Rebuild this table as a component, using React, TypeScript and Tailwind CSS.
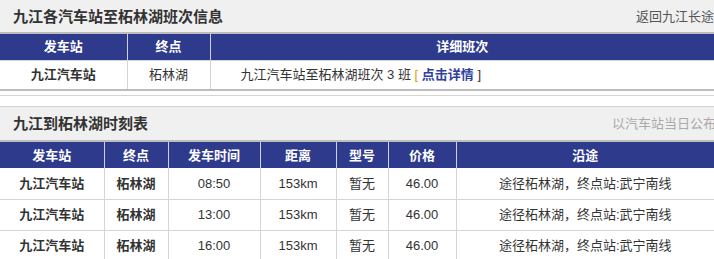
import React from 'react';

const rows = [
  { time: '08:50' },
  { time: '13:00' },
  { time: '16:00' },
];

const th = 'border-x border-[#cfd2e6] font-bold text-white text-[13px] text-center';
const td = 'border border-[#d4d4d4] text-[13px] text-center text-[#333]';

export default function App() {
  return (
    <div className="w-[714px] h-[259px] overflow-hidden bg-white font-['Liberation_Sans','Noto_Sans_CJK_SC',sans-serif] leading-none">
      <section className="border-b border-[#d4d4d4] pb-[4px]">
        <div className="h-[34px] flex items-center bg-[#f0f0f0] border-b-2 border-[#bcbcbc]">
          <h2 className="pl-[13px] text-[15px] font-bold text-[#333]">九江各汽车站至柘林湖班次信息</h2>
          <div className="ml-auto w-[78px] shrink-0 whitespace-nowrap text-[13px] text-[#555]">返回九江长途汽车站</div>
        </div>
        <table className="w-[714px] table-fixed border-collapse border-b-2 border-[#bcbcbc]">
          <colgroup>
            <col className="w-[127px]" />
            <col className="w-[83px]" />
            <col />
          </colgroup>
          <thead>
            <tr className="h-[26px] bg-[#2e3a8c]">
              <th className={th + ' border-l-0'}>发车站</th>
              <th className={th}>终点</th>
              <th className={th + ' border-r-0'}>详细班次</th>
            </tr>
          </thead>
          <tbody>
            <tr className="h-[30px]">
              <td className={td + ' border-l-0 border-b-0 font-bold text-[#2f40a0]'}>九江汽车站</td>
              <td className={td + ' border-b-0'}>柘林湖</td>
              <td className={td + ' border-r-0 border-b-0 text-left pl-[30px]'}>
                九江汽车站至柘林湖班次 3 班 <span className="text-[#e89a00]">[</span>{' '}
                <a className="font-bold text-[#2f40a0]">点击详情</a> ]
              </td>
            </tr>
          </tbody>
        </table>
      </section>

      <section className="mt-[10px] border-t border-[#d4d4d4]">
        <div className="h-[35px] flex items-center bg-[#f0f0f0] border-b-2 border-[#bcbcbc]">
          <h2 className="pl-[13px] text-[15px] font-bold text-[#333]">九江到柘林湖时刻表</h2>
          <div className="ml-auto w-[102px] shrink-0 whitespace-nowrap text-[13px] text-[#aaa]">以汽车站当日公布时刻为准</div>
        </div>
        <table className="w-[714px] table-fixed border-collapse">
          <colgroup>
            <col className="w-[104px]" />
            <col className="w-[64px]" />
            <col className="w-[92px]" />
            <col className="w-[76px]" />
            <col className="w-[52px]" />
            <col className="w-[68px]" />
            <col />
          </colgroup>
          <thead>
            <tr className="h-[26px] bg-[#2e3a8c]">
              <th className={th + ' border-l-0'}>发车站</th>
              <th className={th}>终点</th>
              <th className={th}>发车时间</th>
              <th className={th}>距离</th>
              <th className={th}>型号</th>
              <th className={th}>价格</th>
              <th className={th + ' border-r-0'}>沿途</th>
            </tr>
          </thead>
          <tbody>
            {rows.map((r) => (
              <tr key={r.time} className="h-[31px]">
                <td className={td + ' border-l-0 border-t-0 font-bold text-[#2f40a0]'}>九江汽车站</td>
                <td className={td + ' border-t-0 font-bold text-[#2f40a0]'}>柘林湖</td>
                <td className={td + ' border-t-0'}>{r.time}</td>
                <td className={td + ' border-t-0'}>153km</td>
                <td className={td + ' border-t-0'}>暂无</td>
                <td className={td + ' border-t-0'}>46.00</td>
                <td className={td + ' border-t-0 border-r-0'}>途径柘林湖，终点站:武宁南线</td>
              </tr>
            ))}
          </tbody>
        </table>
      </section>
    </div>
  );
}
